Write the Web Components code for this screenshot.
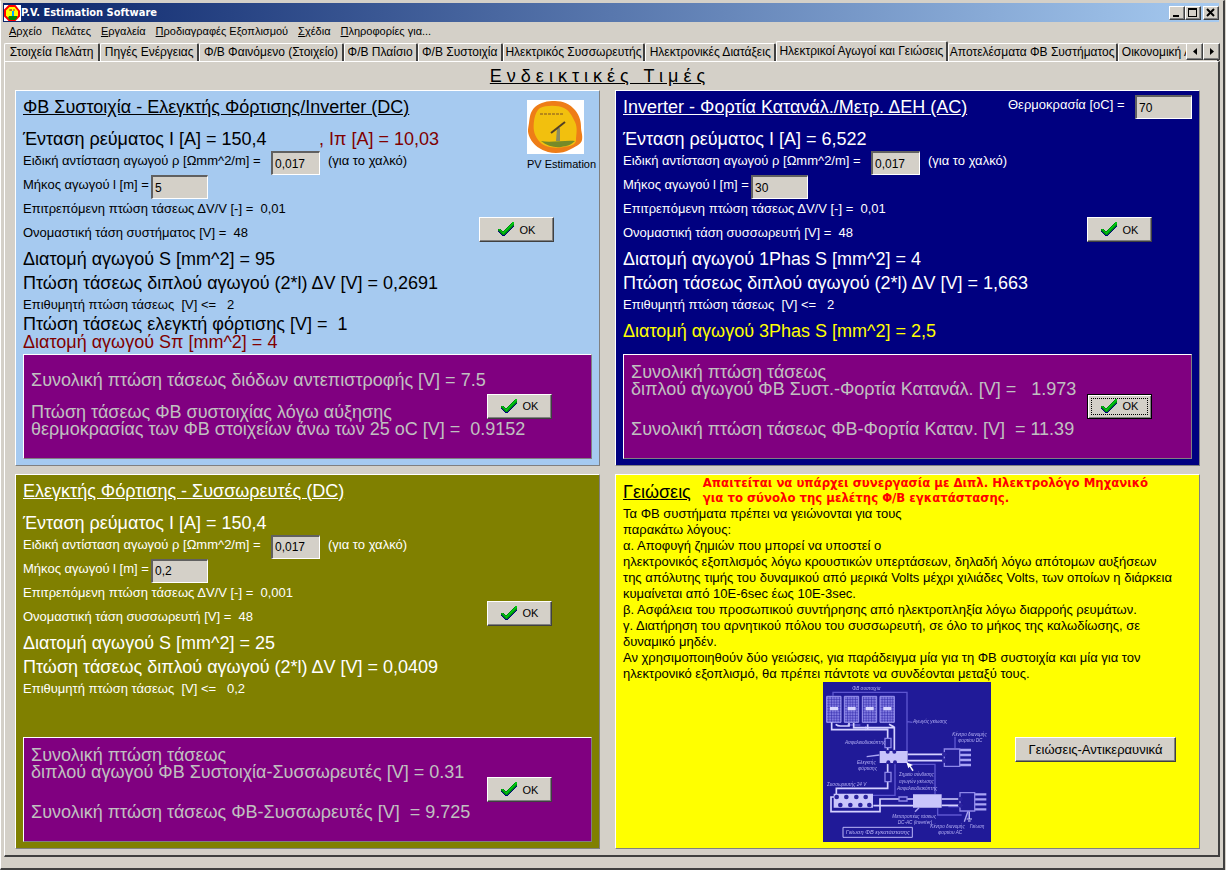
<!DOCTYPE html>
<html lang="el">
<head>
<meta charset="utf-8">
<title>P.V. Estimation Software</title>
<style>
html, body { margin: 0; background: #d4d0c8; }
body { font-family: "Liberation Sans", Arial, sans-serif; color: #000; }
</style>
</head>
<body>
<pv-window caption="P.V. Estimation Software">
  <pv-menu slot="menu"></pv-menu>
  <pv-tabs slot="tabs"></pv-tabs>
  <pv-board>
    <pv-panel tone="sky" heading="ΦΒ Συστοιχία - Ελεγκτής Φόρτισης/Inverter (DC)">
      <pv-line size="big">Ένταση ρεύματος I [A] = 150,4<pv-note slot="extra">, Iπ [A] = 10,03</pv-note></pv-line>
      <pv-field label="Ειδική αντίσταση αγωγού ρ [Ωmm^2/m] =" kind="ohm" value="0,017">(για το χαλκό)</pv-field>
      <pv-field label="Μήκος αγωγού l [m] =" kind="len" value="5"></pv-field>
      <pv-line>Επιτρεπόμενη πτώση τάσεως ΔV/V [-] =  0,01</pv-line>
      <pv-line>Ονομαστική τάση συστήματος [V] =  48</pv-line>
      <pv-line size="big">Διατομή αγωγού S [mm^2] = 95</pv-line>
      <pv-line size="big">Πτώση τάσεως διπλού αγωγού (2*l) ΔV [V] = 0,2691</pv-line>
      <pv-line size="short">Επιθυμητή πτώση τάσεως  [V] &lt;=   2</pv-line>
      <pv-line size="dense">Πτώση τάσεως ελεγκτή φόρτισης [V] =  1</pv-line>
      <pv-line size="dense" tone="maroon">Διατομή αγωγού Sπ [mm^2] = 4</pv-line>
      <pv-logo slot="mark"></pv-logo>
      <pv-ok slot="action" wide></pv-ok>
      <pv-totals slot="totals">
        <pv-sum tone="half">Συνολική πτώση τάσεως διόδων αντεπιστροφής [V] = 7.5</pv-sum>
        <pv-sum tone="gap">Πτώση τάσεως ΦΒ συστοιχίας λόγω αύξησης</pv-sum>
        <pv-sum>θερμοκρασίας των ΦΒ στοιχείων άνω των 25 οC [V] =  0.9152</pv-sum>
      </pv-totals>
    </pv-panel>

    <pv-panel tone="navy" heading="Inverter - Φορτία Κατανάλ./Μετρ. ΔΕΗ (AC)">
      <pv-field slot="corner" label="Θερμοκρασία [οC] =" kind="len" value="70"></pv-field>
      <pv-line size="big">Ένταση ρεύματος I [A] = 6,522</pv-line>
      <pv-field label="Ειδική αντίσταση αγωγού ρ [Ωmm^2/m] =" kind="ohm" value="0,017">(για το χαλκό)</pv-field>
      <pv-field label="Μήκος αγωγού l [m] =" kind="len" value="30"></pv-field>
      <pv-line>Επιτρεπόμενη πτώση τάσεως ΔV/V [-] =  0,01</pv-line>
      <pv-line>Ονομαστική τάση συσσωρευτή [V] =  48</pv-line>
      <pv-line size="big">Διατομή αγωγού 1Phas S [mm^2] = 4</pv-line>
      <pv-line size="big">Πτώση τάσεως διπλού αγωγού (2*l) ΔV [V] = 1,663</pv-line>
      <pv-line size="short">Επιθυμητή πτώση τάσεως  [V] &lt;=   2</pv-line>
      <pv-line size="big" tone="yellow">Διατομή αγωγού 3Phas S [mm^2] = 2,5</pv-line>
      <pv-ok slot="action"></pv-ok>
      <pv-totals slot="totals" focused>
        <pv-sum>Συνολική πτώση τάσεως</pv-sum>
        <pv-sum>διπλού αγωγού ΦΒ Συστ.-Φορτία Κατανάλ. [V] =   1.973</pv-sum>
        <pv-sum tone="far">Συνολική πτώση τάσεως ΦΒ-Φορτία Καταν. [V]  = 11.39</pv-sum>
      </pv-totals>
    </pv-panel>

    <pv-panel tone="olive" heading="Ελεγκτής Φόρτισης - Συσσωρευτές (DC)">
      <pv-line size="big">Ένταση ρεύματος I [A] = 150,4</pv-line>
      <pv-field label="Ειδική αντίσταση αγωγού ρ [Ωmm^2/m] =" kind="ohm" value="0,017">(για το χαλκό)</pv-field>
      <pv-field label="Μήκος αγωγού l [m] =" kind="len" value="0,2"></pv-field>
      <pv-line>Επιτρεπόμενη πτώση τάσεως ΔV/V [-] =  0,001</pv-line>
      <pv-line>Ονομαστική τάση συσσωρευτή [V] =  48</pv-line>
      <pv-line size="big">Διατομή αγωγού S [mm^2] = 25</pv-line>
      <pv-line size="big">Πτώση τάσεως διπλού αγωγού (2*l) ΔV [V] = 0,0409</pv-line>
      <pv-line size="short">Επιθυμητή πτώση τάσεως  [V] &lt;=   0,2</pv-line>
      <pv-ok slot="action"></pv-ok>
      <pv-totals slot="totals">
        <pv-sum>Συνολική πτώση τάσεως</pv-sum>
        <pv-sum>διπλού αγωγού ΦΒ Συστοιχία-Συσσωρευτές [V] = 0.31</pv-sum>
        <pv-sum tone="far">Συνολική πτώση τάσεως ΦΒ-Συσσωρευτές [V]  = 9.725</pv-sum>
      </pv-totals>
    </pv-panel>

    <pv-earthing></pv-earthing>
  </pv-board>
</pv-window>

<script>
const define = (name, html, setup) => {
  const template = document.createElement("template");
  template.innerHTML = html.trim();
  customElements.define(name, class extends HTMLElement {
    constructor() {
      super();
      this.attachShadow({ mode: "open" }).append(template.content.cloneNode(true));
    }
    connectedCallback() { if (setup) setup(this, this.shadowRoot); }
  });
};

const BUTTON = `
  button { box-sizing: border-box; margin: 0; padding: 0; background: #d4d0c8; color: #000; font: inherit;
    border: 1px solid; border-color: #fff #404040 #404040 #fff; box-shadow: inset -1px -1px #808080;
    display: flex; align-items: center; justify-content: center; outline: none; }`;

define("pv-window", `
<style>
  :host { display: flex; flex-direction: column; min-height: 100vh; box-sizing: border-box; padding: 1px 4px 0 2px;
    background: #d4d0c8; border: solid; border-width: 1px 2px 2px 1px; border-color: #d4d0c8 #404040 #404040 #fff; margin-right: 1px; }
  header { display: flex; align-items: center; height: 19px; margin: 1px 0 0; padding: 0 0 0 1px;
    background: linear-gradient(90deg, #0a246a, #a6caf0); }
  h1 { margin: 0; flex: 1; font: bold 11px/18px "DejaVu Sans Condensed", "DejaVu Sans", sans-serif; color: #fff; }
  svg { display: block; }
  ${BUTTON}
  button { width: 16px; height: 14px; }
  button + button + button { margin-left: 2px; }
</style>
<header>
  <svg width="17" height="18" viewBox="0 0 17 18" aria-hidden="true"><path d="M0 1h17v16H0z" fill="#fff"/><path d="M5 2h6l4 5v5l-4 4H5l-4-4V6z" fill="#ff0" stroke="#f00" stroke-width="2"/><path d="M5 12h8v2l-2 2H6l-2-2z" fill="#080"/><path d="M5 6h3M7 5v2M9 6h2" stroke="#a33" stroke-width="1"/><path d="M9 7v5" stroke="#0af" stroke-width="2"/></svg>
  <h1></h1>
  <button aria-label="Ελαχιστοποίηση"><svg width="12" height="10"><path d="M2 8h6" stroke="#000" stroke-width="2"/></svg></button>
  <button aria-label="Μεγιστοποίηση"><svg width="12" height="10" shape-rendering="crispEdges"><path d="M1.500 1v7.500h8V1M1 1h9" fill="none" stroke="#000"/><path d="M1 1h9" stroke="#000" stroke-width="2"/></svg></button>
  <button aria-label="Κλείσιμο"><svg width="12" height="10"><path d="M2 1l7 7M9 1L2 8" stroke="#000" stroke-width="2"/></svg></button>
</header>
<slot name="menu"></slot>
<slot name="tabs"></slot>
<slot></slot>`, (el, root) => { root.querySelector("h1").textContent = el.getAttribute("caption"); });

define("pv-menu", `
<style>
  :host { display: block; }
  nav { display: flex; gap: 10px; height: 19px; padding: 0 6px; font-size: 11px; line-height: 19px; }
  a { color: #000; text-decoration: none; white-space: nowrap; }
</style>
<nav><a href="#"><u>Α</u>ρχείο</a><a href="#">Πελάτες</a><a href="#"><u>Ε</u>ργαλεία</a><a href="#"><u>Π</u>ροδιαγραφές Εξοπλισμού</a><a href="#"><u>Σ</u>χέδια</a><a href="#"><u>Π</u>ληροφορίες για...</a></nav>`);

define("pv-tabs", `
<style>
  :host { display: block; position: relative; }
  [role=tablist] { display: grid; align-items: end; height: 20px; margin-left: 1px; overflow: hidden;
    grid-template-columns: 96fr 99fr 144fr 74fr 85fr 142fr 131fr 171fr 170fr 101fr; }
  [role=tab] { box-sizing: border-box; height: 18px; padding: 0; min-width: 0; border: solid; border-width: 1px 2px 0 1px;
    border-color: #fff #404040 #fff #fff; border-radius: 2px 2px 0 0; background: #d4d0c8;
    font: 12px/17px "Liberation Sans", sans-serif; color: #000; white-space: nowrap; overflow: hidden;
    display: flex; justify-content: center; }
  [role=tab]:last-child { justify-content: flex-start; padding-left: 3px; }
  [aria-selected=true] { height: 20px; position: relative; line-height: 18px; }
  div.scroll { position: absolute; right: -1px; top: 2px; display: flex; }
  ${BUTTON}
  .scroll button { width: 17px; height: 17px; }
</style>
<div role="tablist"></div>
<div class="scroll">
  <button aria-label="Προηγούμενες"><svg width="8" height="9"><path d="M6 1v7L2 4.500z"/></svg></button>
  <button aria-label="Επόμενες"><svg width="8" height="9"><path d="M2 1v7l4-3.500z"/></svg></button>
</div>`, (el, root) => {
  const names = ["Στοιχεία Πελάτη", "Πηγές Ενέργειας", "Φ/Β Φαινόμενο (Στοιχείο)", "Φ/Β Πλαίσιο", "Φ/Β Συστοιχία",
    "Ηλεκτρικός Συσσωρευτής", "Ηλεκτρονικές Διατάξεις", "Ηλεκτρικοί Αγωγοί και Γειώσεις", "Αποτελέσματα ΦΒ Συστήματος", "Οικονομική Α"];
  root.querySelector("[role=tablist]").append(...names.map((name, i) => {
    const tab = document.createElement("div");
    tab.setAttribute("role", "tab");
    tab.setAttribute("aria-selected", i === 7);
    tab.textContent = name;
    return tab;
  }));
});

define("pv-board", `
<style>
  :host { display: flex; flex-direction: column; flex: 1; margin: 0 -1px 11px 1px; padding: 4px 18px 6px 10px;
    border: solid; border-width: 1px 2px 2px 1px; border-color: #fff #404040 #404040 #fff; }
  h2 { margin: 0 20px 4px 0; font-size: 18px; line-height: 20px; font-weight: 400; text-align: center; text-decoration: underline; }
  .grid { display: grid; grid-template-columns: 1fr 1fr; grid-template-rows: 1fr 1fr; gap: 8px 15px; flex: 1; }
</style>
<h2>Ε ν δ ε ι κ τ ι κ έ ς &nbsp; Τ ι μ έ ς</h2>
<div class="grid"><slot></slot></div>`);

define("pv-panel", `
<style>
  :host { display: flex; flex-direction: column; min-width: 0; box-sizing: border-box; padding: 4px 7px 6px;
    border: 1px solid; border-color: #fff #808080 #808080 #fff; }
  :host([tone=sky]) { background: #a6caf0; }
  :host([tone=navy]) { background: #000080; color: #fff; }
  :host([tone=olive]) { background: #808000; color: #fff; }
  .top { display: flex; margin-bottom: 8px; justify-content: space-between; height: 24px; }
  h3 { margin: 0; font-size: 18px; line-height: 24px; font-weight: 400; text-decoration: underline; white-space: nowrap; }
  .main { display: flex; flex: 1; min-height: 0; }
  .rows { flex: 1; min-width: 0; }
  .side { display: flex; flex-direction: column; align-items: flex-start; height: 115px; }
  slot[name=action] { display: block; margin-top: auto; }
</style>
<div class="top"><h3></h3><slot name="corner"></slot><slot name="mark"></slot></div>
<div class="main">
  <div class="rows"><slot></slot></div>
  <div class="side"><slot name="action"></slot></div>
</div>
<slot name="totals"></slot>`, (el, root) => { root.querySelector("h3").textContent = el.getAttribute("heading"); });

define("pv-line", `
<style>
  :host { display: flex; height: 24px; font-size: 13px; line-height: 20px; white-space: pre; }
  :host([size=big]) { font-size: 18px; line-height: 24px; height: 24px; }
  :host([size=dense]) { font-size: 18px; line-height: 18px; height: 18px; }
  :host([size=short]) { height: 20px; }
  :host([tone=maroon]) { color: #800000; }
  :host([tone=yellow]) { color: #ff0; margin-top: 4px; }
  span { min-width: 296px; }
</style><span><slot></slot></span><slot name="extra"></slot>`);

define("pv-note", `<style>:host { display: block; color: #800000; }</style><slot></slot>`);

define("pv-field", `
<style>
  :host { display: flex; height: 24px; font-size: 13px; line-height: 20px; white-space: nowrap; }
  label { display: flex; }
  .name { min-width: 128px; }
  :host([kind=ohm]) .name { min-width: 248px; }
  :host([slot=corner]) .name { min-width: 127px; }
  input { box-sizing: border-box; width: 57px; height: 24px; margin: 0; padding: 0 2px; font: 12px/20px "Liberation Sans", sans-serif;
    color: #000; background: #d4d0c8; border: solid; border-width: 2px 1px 1px 2px; border-color: #606060 #fff #fff #606060; border-radius: 0; outline: none; }
  :host([kind=ohm]) input { width: 49px; margin-right: 8px; }
</style>
<label><span class="name"></span><input type="text"></label><slot></slot>`, (el, root) => {
  root.querySelector(".name").textContent = el.getAttribute("label");
  root.querySelector("input").value = el.getAttribute("value");
});

define("pv-ok", `
<style>
  :host { display: block; margin-right: 40px; }
  ${BUTTON}
  button { width: 65px; height: 25px; gap: 6px; font-size: 11px; }
  :host([wide]) { margin-right: 38px; }
  :host([wide]) button { width: 75px; }
  :host([focused]) button { border-color: #000; box-shadow: inset 1px 1px #fff, inset -1px -1px #808080; outline: 1px dotted #000; outline-offset: -5px; }
</style>
<button><svg width="16" height="15" viewBox="0 0 16 15" shape-rendering="crispEdges" aria-hidden="true"><path d="M0 8h3l3 3 8-9h2v2L7 14H5L0 10z" fill="#000080"/><path d="M0 7l3 0 2 3L14 0h2v3L6 13H5L0 9z" fill="#008a10"/><path d="M0 7h2l3 4L14 1V0h2v1L5 12z" fill="#00c810"/></svg>OK</button>`);

define("pv-totals", `
<style>
  :host { display: flex; box-sizing: border-box; flex: none; height: 105px; padding: 9px 0 0 7px; background: #800080; color: #c0c0c0;
    border: 1px solid; border-color: #fff #808080 #808080 #fff; }
  .sums { flex: 1; min-width: 0; }
  pv-ok { margin: 30px 39px 0 0; }
</style>
<div class="sums"><slot></slot></div><pv-ok></pv-ok>`, (el, root) => {
  root.querySelector("pv-ok").toggleAttribute("focused", el.hasAttribute("focused"));
});

define("pv-sum", `
<style>
  :host { display: block; font-size: 18px; line-height: 17px; white-space: pre; }
  :host([tone=half]) { margin-top: 8px; }
  :host([tone=gap]) { margin-top: 15px; }
  :host([tone=far]) { margin-top: 23px; }
</style><slot></slot>`);

define("pv-logo", `
<style>
  :host { display: block; width: 65px; height: 24px; font-size: 11px; }
  figure { margin: 5px 0 0; }
  svg { display: block; }
  figcaption { line-height: 20px; white-space: nowrap; }
</style>
<figure>
<svg width="57" height="54" viewBox="0 0 57 54" aria-hidden="true">
  <path d="M0 0h57v54H0z" fill="#fff"/>
  <path d="M8 7C14 2 20 1 28 1s15 3 20 9 6 12 6 17 2 8 1 13-8 7-13 10-14 4-21 2S6 45 3 38 1 30 2 23 3 12 8 7z" fill="#ee7d17"/>
  <path d="M13 8c6-3 18-3 24 0s8 8 11 14 1 13 1 18-6 6-12 7-12 1-18-1S8 37 7 31 7 12 13 8z" fill="#f2c00e"/>
  <path d="M14 41c9 2 24-1 34 0-4 4-8 5-14 6s-14-1-20-6z" fill="#768a28"/>
  <path d="M30 28h3v13h-4z" fill="#8b8b62"/><path d="M24 33l14-11" stroke="#523f24" stroke-width="2"/>
  <path d="M13 14h23" stroke="#b78819" stroke-width="2" stroke-dasharray="3 1"/>
</svg>
<figcaption>PV Estimation</figcaption>
</figure>`);

define("pv-diagram", `
<style>:host { display: block; width: 168px; } svg { display: block; width: 100%; } text { font: italic 14px "Liberation Sans", sans-serif; }</style>
<svg viewBox="24 21 504 480" role="img" aria-label="Γείωση ΦΒ εγκατάστασης">
  <defs><pattern id="cells" width="8" height="8" patternUnits="userSpaceOnUse"><path d="M0 0h8v8H0z" fill="#7f79e0"/><path d="M0 0h8M0 0v8" stroke="#2d25a8" stroke-width="3"/></pattern>
  <filter id="soft"><feGaussianBlur stdDeviation="2"/></filter></defs>
  <path d="M24 21h504v480H24z" fill="#201a98"/>
  <g filter="url(#soft)">
    <g fill="none" stroke="#5d56d0" stroke-width="4">
      <path d="M54 62V52h222v180M278 140l14 2M152 154v12M96 150h40M420 185v35M240 265v96h-70M280 268h80v90M368 400v20h72M240 280v80M400 395h40M460 390v40"/>
      <path d="M155 245l38-5M300 410l12-12M448 440l14-40" stroke="#aaa5f2"/>
    </g>
    <g fill="url(#cells)" stroke="#9b96ee" stroke-width="3"><path d="M35 64h43v78H35zM88 64h43v78H88zM142 64h43v78h-43zM195 64h43v78h-43z"/></g>
    <g fill="#d9d7ff"><path d="M45 96h24v10H45zM98 96h24v10H98zM152 96h24v10h-24zM205 96h24v10h-24z"/></g>
    <g fill="none" stroke="#d5d2ff" stroke-width="5">
      <path d="M50 142v22h168v65M62 148q6 5 14 5h26V144M116 144v14h122v70M158 148v16M222 148l16 8M218 265v75H64v28M278 238h110M278 257h110M175 392h120M195 408v-36h62M275 372h20M195 392v18H48v-44h14M380 372h56M380 391h56"/>
    </g>
    <g fill="none" stroke="#a9a4f5" stroke-width="7"><path d="M435 225h33M435 240h33M435 255h33M435 270h33M480 358h34M480 373h34M480 388h34M480 403h34"/></g>
    <g fill="#201a98" stroke="#8d87e8" stroke-width="4"><path d="M210 190h18v28h-18zM210 292h18v28h-18zM252 366h24v12h-24zM388 222h46v52h-46zM435 353h44v55h-44z"/></g>
    <path d="M194 228h84v36h-84zM294 358h86v40h-86zM56 356h118v42H56z" fill="#c9c5fb"/>
    <g fill="#2c249e"><circle cx="218" cy="230" r="6"/><circle cx="238" cy="230" r="6"/><circle cx="220" cy="262" r="6"/><circle cx="240" cy="262" r="6"/>
      <circle cx="65" cy="366" r="7"/><circle cx="94" cy="366" r="7"/><circle cx="124" cy="366" r="7"/><circle cx="152" cy="366" r="7"/>
      <circle cx="76" cy="390" r="7"/><circle cx="106" cy="390" r="7"/><circle cx="136" cy="390" r="7"/><circle cx="163" cy="390" r="7"/>
      <circle cx="388" cy="238" r="7"/><circle cx="388" cy="257" r="7"/><circle cx="436" cy="372" r="7"/><circle cx="436" cy="391" r="7"/></g>
    <path d="M274 262l6 18 4-5 8 14 4-3-9-13 7-3z" fill="#fff"/>
    <path d="M463 410v22M455 432h16M459 438h8" stroke="#d5d2ff" stroke-width="3"/>
    <path d="M84 457h208v30H84z" fill="none" stroke="#b9b5f7" stroke-width="3"/>
    <g fill="#b5b0f5">
      <text x="112" y="45">ΦΒ συστοιχία</text><text x="294" y="145">Αγωγός γείωσης</text>
      <text x="412" y="182">Κέντρο διανομής</text><text x="430" y="201">φορτίου DC</text>
      <text x="90" y="206">Ασφαλειοδιακόπτης</text><text x="126" y="267">Ελεγκτής</text><text x="130" y="286">φόρτισης</text>
      <text x="252" y="304">Σημείο σύνδεσης</text><text x="252" y="324">αγωγών γείωσης</text><text x="246" y="346">Ασφαλειοδιακόπτης</text>
      <text x="36" y="334">Συσσωρευτής 24 V</text><text x="232" y="428">Μετατροπέας τάσεως</text><text x="248" y="447">DC-AC (inverter)</text>
      <text x="346" y="460">Κέντρο διανομής</text><text x="370" y="478">φορτίου AC</text><text x="464" y="460">Γείωση</text>
      <text x="92" y="478" style="font-size:17px">Γείωση ΦΒ εγκατάστασης</text>
    </g>
  </g>
</svg>`);

define("pv-earthing", `
<style>
  :host { display: block; min-width: 0; box-sizing: border-box; padding: 0 7px 4px; background: #ff0;
    border: 1px solid; border-color: #fff #808080 #808080 #fff; }
  header { display: flex; gap: 12px; height: 31px; }
  h3 { margin: 0; font-size: 18px; line-height: 35px; font-weight: 400; text-decoration: underline; }
  strong { font: bold 13px/15px "DejaVu Sans Condensed", sans-serif; color: #f00; white-space: nowrap; }
  p { margin: 0; font-size: 13px; line-height: 16px; white-space: nowrap; }
  .foot { display: flex; margin-left: 200px; gap: 24px; }
  ${BUTTON}
  button { width: 161px; height: 25px; margin-top: 55px; font-size: 13px; }
</style>
<header><h3>Γειώσεις</h3><strong>Απαιτείται να υπάρχει συνεργασία με Διπλ. Ηλεκτρολόγο Μηχανικό<br>για το σύνολο της μελέτης Φ/Β εγκατάστασης.</strong></header>
<p>Τα ΦΒ συστήματα πρέπει να γειώνονται για τους<br>παρακάτω λόγους:<br>α. Αποφυγή ζημιών που μπορεί να υποστεί ο<br>ηλεκτρονικός εξοπλισμός λόγω κρουστικών υπερτάσεων, δηλαδή λόγω απότομων αυξήσεων<br>της απόλυτης τιμής του δυναμικού από μερικά Volts μέχρι χιλιάδες Volts, των οποίων η διάρκεια<br>κυμαίνεται από 10E-6sec έως 10E-3sec.<br>β. Ασφάλεια του προσωπικού συντήρησης από ηλεκτροπληξία λόγω διαρροής ρευμάτων.<br>γ. Διατήρηση του αρνητικού πόλου του συσσωρευτή, σε όλο το μήκος της καλωδίωσης, σε<br>δυναμικό μηδέν.<br>Αν χρησιμοποιηθούν δύο γειώσεις, για παράδειγμα μία για τη ΦΒ συστοιχία και μία για τον<br>ηλεκτρονικό εξοπλισμό, θα πρέπει πάντοτε να συνδέονται μεταξύ τους.</p>
<div class="foot"><pv-diagram></pv-diagram><button>Γειώσεις-Αντικεραυνικά</button></div>`);
</script>
</body>
</html>
